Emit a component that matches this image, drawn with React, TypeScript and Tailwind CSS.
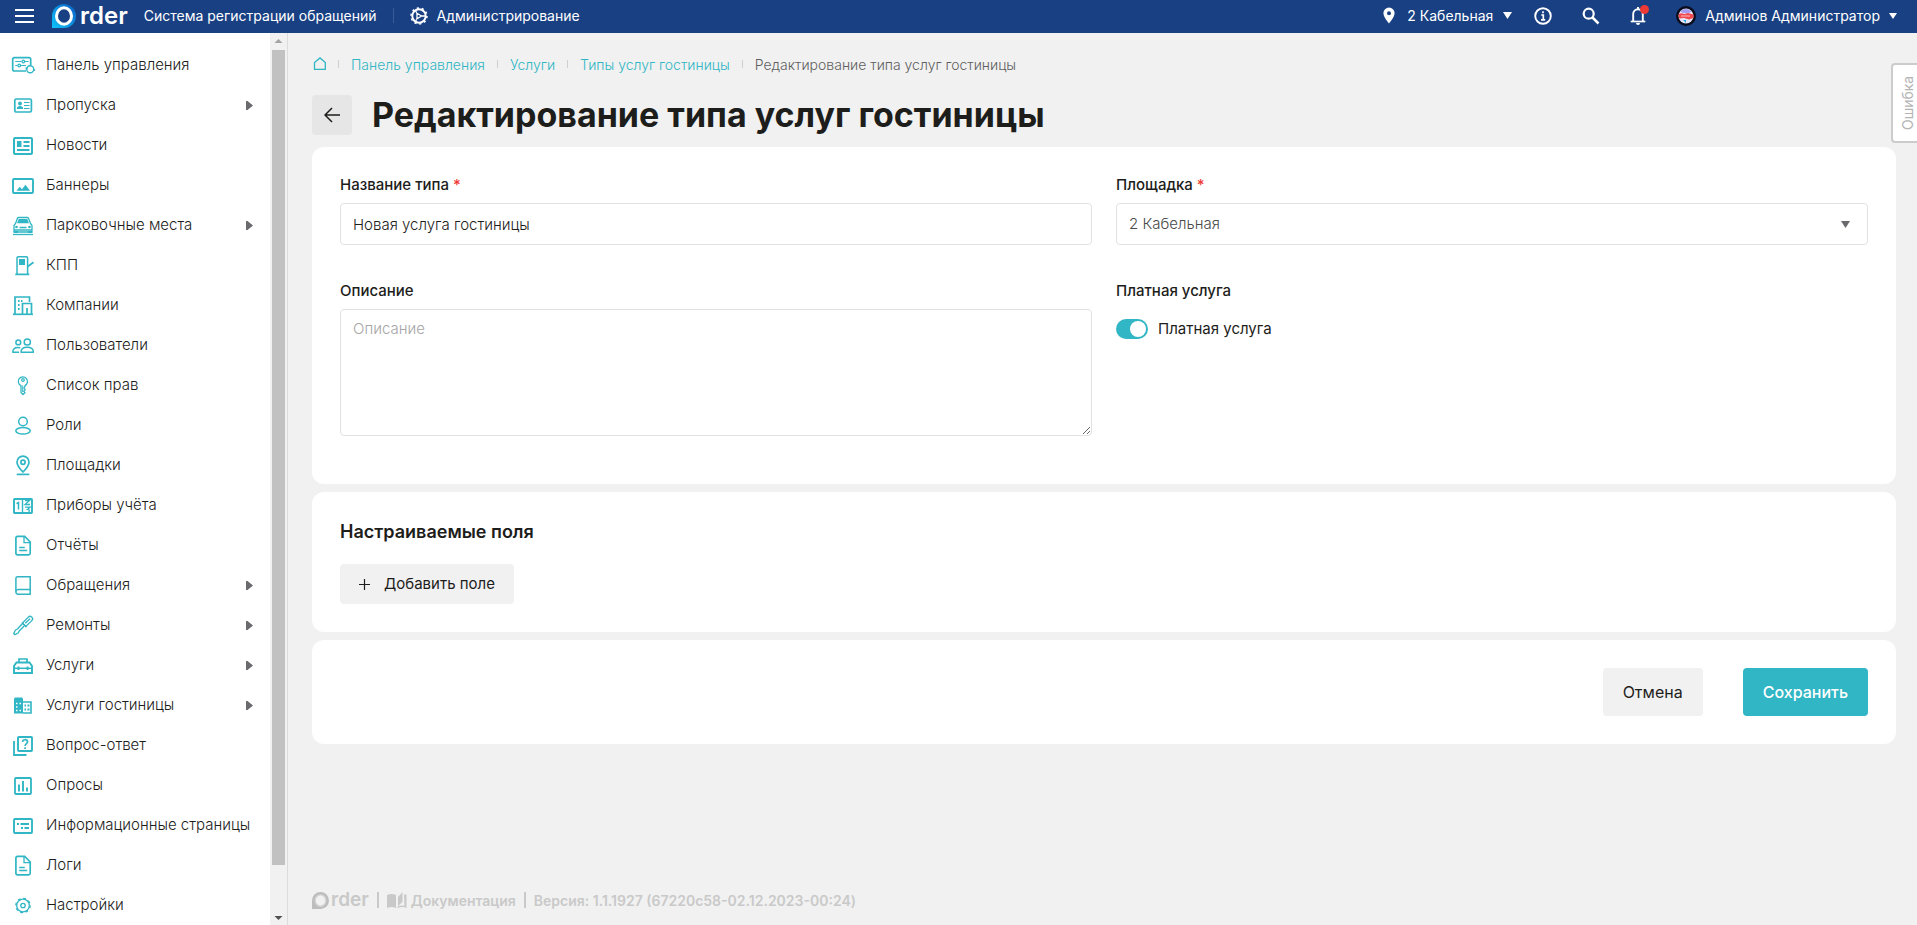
import React, { useState } from "react";
import clsx from "clsx";

type IconProps = { children: React.ReactNode };

function MenuIcon({ children }: IconProps) {
  return (
    <svg
      viewBox="0 0 22 22"
      className="h-[22px] w-[22px] shrink-0 overflow-visible text-[#30b6c4]"
      fill="none"
      stroke="currentColor"
      strokeWidth="1.7"
      aria-hidden="true"
    >
      {children}
    </svg>
  );
}

const documentIcon = (
  <>
    <path d="M5.5 2.3h7.2l5.5 5.7v11.2a1.6 1.6 0 0 1-1.6 1.6H5.5a1.6 1.6 0 0 1-1.6-1.6V3.9a1.6 1.6 0 0 1 1.6-1.6z" />
    <path d="M12 2.5v6.2h6M7.2 13.5h5.6M7.2 16.5h8" strokeWidth="1.3" />
  </>
);

const menu: { title: string; icon: React.ReactNode; nested?: boolean }[] = [
  {
    title: "Панель управления",
    icon: (
      <>
        <path d="M14 17H2.3A1.6 1.6 0 0 1 .7 15.4V5.3a1.6 1.6 0 0 1 1.6-1.6h14.8a1.6 1.6 0 0 1 1.6 1.6V11" />
        <path d="M3.3 7.5h6M13 7.5h3.5M3.3 11.5h2.2M9 11.5h5" strokeWidth="1.2" />
        <circle cx="11.3" cy="7.5" r="1.3" strokeWidth="1.2" />
        <circle cx="7.2" cy="11.5" r="1.3" strokeWidth="1.2" />
        <circle cx="18.2" cy="15.3" r="3.5" strokeWidth="1.4" />
        <path d="M13.5 14.3h2M21 16h2.2" />
      </>
    ),
  },
  {
    title: "Пропуска",
    nested: true,
    icon: (
      <>
        <rect x="2.8" y="5" width="16.6" height="13" rx="1.5" />
        <circle cx="8" cy="9.5" r="1.9" fill="currentColor" stroke="none" />
        <path d="M4.8 15c0-2.2 1.5-3 3.2-3s3.2.8 3.2 3z" fill="currentColor" stroke="none" />
        <path d="M12 8.5h5.5M12 11.5h5.5M12 14.5h5.5" strokeWidth="1.2" />
      </>
    ),
  },
  {
    title: "Новости",
    icon: (
      <>
        <rect x="2" y="4" width="18" height="16" rx="1" strokeWidth="2" />
        <path d="M5 7h4.5v6H5z" fill="currentColor" stroke="none" />
        <path d="M11.5 8h6M11.5 12h6M5 16h12.5" strokeWidth="2" />
      </>
    ),
  },
  {
    title: "Баннеры",
    icon: (
      <>
        <rect x="1" y="5" width="20" height="14" rx="1" strokeWidth="1.9" />
        <path d="M4.5 16.8l3.2-4 2.3 2.5 3.5-4.5 4.5 6z" fill="currentColor" stroke="none" />
      </>
    ),
  },
  {
    title: "Парковочные места",
    nested: true,
    icon: (
      <>
        <path d="M3.5 9.5l2-5.2a1.5 1.5 0 0 1 1.3-.8h8.4a1.5 1.5 0 0 1 1.3.8l2 5.2 1.5 2V18H2v-6.5z" strokeWidth="1.3" />
        <path d="M6.7 5h8.6l1.7 4.3H5z" fill="currentColor" stroke="none" />
        <path d="M7.5 13.5h7M2 16h18" strokeWidth="1.3" />
        <circle cx="4.5" cy="13" r="1.3" fill="currentColor" stroke="none" />
        <circle cx="17.5" cy="13" r="1.3" fill="currentColor" stroke="none" />
        <path d="M2 17h4v2H2zM16 17h4v2h-4z" fill="currentColor" stroke="none" />
        <path d="M1 20.5h20" strokeWidth="1.3" />
      </>
    ),
  },
  {
    title: "КПП",
    icon: (
      <>
        <path d="M5 20V4a1.3 1.3 0 0 1 1.3-1.3h8A1.3 1.3 0 0 1 15.6 4v16" strokeWidth="1.5" />
        <path d="M7 5h6v6H7z" fill="currentColor" stroke="none" />
        <path d="M3.3 20.3h14M15.8 12.5l5.7-4.3" />
      </>
    ),
  },
  {
    title: "Компании",
    icon: (
      <>
        <path d="M3 20V3h14.5v5" />
        <path d="M10.5 20V9.5h9V20M15 20v-6" />
        <path d="M1 20.3h20" />
        <path d="M6 7h1.6M6 11h1.6M6 15h1.6M9 7h1.5" strokeWidth="1.8" />
      </>
    ),
  },
  {
    title: "Пользователи",
    icon: (
      <>
        <circle cx="15.3" cy="8" r="3.1" strokeWidth="1.5" />
        <circle cx="6.3" cy="8.4" r="2.4" strokeWidth="1.5" />
        <path d="M9 18.2c0-3.3 2.7-4.9 6.2-4.9s6.2 1.6 6.2 4.9z" strokeWidth="1.5" strokeLinejoin="round" />
        <path d="M7 18.2H.8c0-3 1.7-4.8 5-4.8 1 0 1.8.2 2.5.5" strokeWidth="1.5" strokeLinejoin="round" />
      </>
    ),
  },
  {
    title: "Список прав",
    icon: (
      <>
        <path d="M9 12V18.5l2 2 2-1.8-1.3-1.6 1.6-1.5-1.4-1.5L13 12.3V11.6a4.6 4.6 0 1 0-4 .1z" strokeWidth="1.3" strokeLinejoin="round" />
        <circle cx="11" cy="6" r="1.3" strokeWidth="1.2" />
        <path d="M10.7 11.5v6.5" strokeWidth="1" />
      </>
    ),
  },
  {
    title: "Роли",
    icon: (
      <>
        <circle cx="11" cy="7.5" r="4.3" strokeWidth="1.5" />
        <ellipse cx="11" cy="16.8" rx="7.2" ry="3.3" strokeWidth="1.5" />
      </>
    ),
  },
  {
    title: "Площадки",
    icon: (
      <>
        <path d="M11 18c-3.7-3.8-6-7-6-9.8a6 6 0 0 1 12 0c0 2.8-2.3 6-6 9.8z" />
        <circle cx="11" cy="8.2" r="2.1" />
        <path d="M4.7 20.4h12.6" />
      </>
    ),
  },
  {
    title: "Приборы учёта",
    icon: (
      <>
        <rect x="2" y="5" width="18" height="14" rx=".8" strokeWidth="1.9" />
        <path d="M10.5 5v14" strokeWidth="1.4" />
        <path d="M4.5 9.7L6.5 8.5V15.5" strokeWidth="1.5" />
        <path d="M13 6.5h4.5l-4.5 4h5M13 13.2h5l-2.5 2.2q2.8.2 1.3 2.6" strokeWidth="1.3" />
      </>
    ),
  },
  { title: "Отчёты", icon: documentIcon },
  {
    title: "Обращения",
    nested: true,
    icon: (
      <>
        <path d="M5.5 2.8h12.7v17.4H6a2.1 2.1 0 0 1-2.1-2.1V4.4a1.6 1.6 0 0 1 1.6-1.6z" strokeWidth="1.5" />
        <path d="M4 17.5a2.1 2.1 0 0 1 2-1.9h12.2" strokeWidth="1.5" />
      </>
    ),
  },
  {
    title: "Ремонты",
    nested: true,
    icon: (
      <>
        <path d="M10.3 9.3l6-6.2a2.4 2.4 0 0 1 3.5 3.5l-6.2 6z" strokeWidth="1.3" strokeLinejoin="round" />
        <path d="M10 10l-4.5 5-2 1-1.8 3.5 1.2 1.2L6.2 19l1-2 4.8-4.8" strokeWidth="1.3" strokeLinejoin="round" />
        <path d="M13.3 9.3l4.7-4.5M10 8.5l4.5 4.5" strokeWidth="1.2" />
      </>
    ),
  },
  {
    title: "Услуги",
    nested: true,
    icon: (
      <>
        <path d="M7 8.5V5h8v3.5" strokeWidth="1.7" />
        <path d="M2 19V12l2.5-3.5h13L20 12v7z" strokeWidth="1.9" />
        <path d="M2 14.3h18" strokeWidth="1.5" />
        <path d="M6.5 12.5V16M15.5 12.5V16" strokeWidth="1.8" />
      </>
    ),
  },
  {
    title: "Услуги гостиницы",
    nested: true,
    icon: (
      <>
        <path d="M3 3.5h7l1 1V19.5H2V4.5z" fill="currentColor" stroke="none" />
        <path d="M11 8h8v11h-8" strokeWidth="1.6" />
        <path d="M4 9.5h1.5M7.5 9.5H9M4 13h1.5M4 16.5h1.5M7.5 16.5H9" stroke="#fff" strokeWidth="1.3" />
        <path d="M12.5 11.5h1.5M15.5 11.5h2M12.5 15.5h1.5M15.5 15.5h2" strokeWidth="2" />
      </>
    ),
  },
  {
    title: "Вопрос-ответ",
    icon: (
      <>
        <rect x="6" y="3" width="14" height="14" rx=".8" strokeWidth="1.9" />
        <path d="M2 7v14h12.5" strokeWidth="1.8" />
        <path d="M10.6 8c0-3 5-3 5-.2 0 1.9-2.5 1.9-2.5 4.2M13.1 13.2v1.7" strokeWidth="1.7" />
      </>
    ),
  },
  {
    title: "Опросы",
    icon: (
      <>
        <rect x="3" y="4" width="16" height="16" rx="1" strokeWidth="1.8" />
        <path d="M7 10.5v7M11 7v10.5M15 13.5v4" strokeWidth="1.9" />
      </>
    ),
  },
  {
    title: "Информационные страницы",
    icon: (
      <>
        <rect x="2" y="5" width="18" height="14" rx="1" strokeWidth="1.9" />
        <path d="M5 10h2M8.5 10h8.5M9 14h2M12.5 14H17" strokeWidth="1.9" />
      </>
    ),
  },
  { title: "Логи", icon: documentIcon },
  {
    title: "Настройки",
    icon: (
      <>
        <circle cx="11" cy="11.5" r="6.3" strokeWidth="1.3" />
        <circle cx="11" cy="11.5" r="7.2" strokeWidth="1.3" strokeDasharray="2.8 2.85" />
        <circle cx="11" cy="11.5" r="2.2" strokeWidth="1.3" />
      </>
    ),
  },
];

const breadcrumbs = ["Панель управления", "Услуги", "Типы услуг гостиницы"];

function Header() {
  return (
    <header className="flex h-[33px] shrink-0 items-center bg-[#184083] pr-5 pb-[2px] pl-[15px] text-[14px] text-white">
      <button type="button" aria-label="Меню" className="flex w-[19px] flex-col gap-1">
        <span className="h-[2px] bg-white" />
        <span className="h-[2px] bg-white" />
        <span className="h-[2px] bg-white" />
      </button>
      <a href="#" className="ml-[18px] flex items-center gap-1">
        <svg viewBox="0 0 24 24" className="h-6 w-6" aria-hidden="true">
          <defs>
            <linearGradient id="drop" x1="0" y1="1" x2="1" y2="0">
              <stop offset="0" stopColor="#10c4fb" />
              <stop offset="1" stopColor="#0a5bc4" />
            </linearGradient>
          </defs>
          <path d="M0 24V12a12 12 0 1 1 12 12z" fill="url(#drop)" />
          <ellipse cx="12" cy="12" rx="7.5" ry="8.3" fill="#184083" stroke="#fff" strokeWidth="3" />
        </svg>
        <span className="text-[24px] leading-[30px] font-semibold">rder</span>
      </a>
      <span className="ml-4">Система регистрации обращений</span>
      <span className="ml-4 h-[15px] w-px bg-[#3a5c96]" />
      <a href="#" className="ml-4 flex items-center gap-[9px]">
        <svg viewBox="0 0 18 18" className="h-[18px] w-[18px]" fill="none" stroke="currentColor" aria-hidden="true">
          <circle cx="9" cy="9" r="6.7" strokeWidth="1.9" />
          <circle cx="9" cy="9" r="8" strokeWidth="1.5" strokeDasharray="2.2 2.83" />
          <path d="M7 6.2L11.5 9 7 11.8zM7 6.5L5.5 3.5M7 11.5l-1.5 3M11.5 9H15.5" strokeWidth="1.3" />
        </svg>
        Администрирование
      </a>

      <button type="button" className="ml-auto flex items-center">
        <svg viewBox="0 0 12 17" className="h-[17px] w-3" fill="currentColor" aria-hidden="true">
          <path fillRule="evenodd" d="M6 .5A5.6 5.6 0 0 0 .4 6.1C.4 10.3 6 16.5 6 16.5s5.6-6.2 5.6-10.4A5.6 5.6 0 0 0 6 .5zm0 3.7a2 2 0 1 1 0 4 2 2 0 0 1 0-4z" />
        </svg>
        <span className="ml-3">2 Кабельная</span>
        <svg viewBox="0 0 9 7" className="ml-[10px] h-[7px] w-[9px]" fill="currentColor" aria-hidden="true">
          <path d="M0 0h9L4.5 7z" />
        </svg>
      </button>
      <button type="button" aria-label="Информация" className="ml-[22px]">
        <svg viewBox="0 0 18 18" className="h-[18px] w-[18px]" fill="none" stroke="currentColor" aria-hidden="true">
          <circle cx="9" cy="9" r="7.8" strokeWidth="1.9" />
          <path d="M9 4.2v2M7.3 8h2v4.7M7 12.9h4.2" strokeWidth="1.7" />
        </svg>
      </button>
      <button type="button" aria-label="Поиск" className="ml-[30px]">
        <svg viewBox="0 0 18 18" className="h-[18px] w-[18px]" fill="none" stroke="currentColor" aria-hidden="true">
          <circle cx="6.7" cy="6.7" r="5" strokeWidth="2.2" />
          <path d="M10.5 10.5l6 6" strokeWidth="2.5" />
        </svg>
      </button>
      <button type="button" aria-label="Уведомления" className="relative ml-[30px]">
        <svg viewBox="0 0 16 19" className="h-[19px] w-4" fill="none" stroke="currentColor" aria-hidden="true">
          <path d="M3.2 15V8a4.8 4.8 0 0 1 9.6 0v7M8 1v2" strokeWidth="1.9" />
          <path d="M.7 15.5h14.6" strokeWidth="1.7" />
          <path d="M6 17h4a2 2 0 0 1-4 0z" fill="currentColor" stroke="none" />
        </svg>
        <span className="absolute -top-px -right-[3px] h-[9px] w-[9px] rounded-full bg-[#ee3a34]" />
      </button>
      <button type="button" className="ml-[30px] flex items-center">
        <svg viewBox="0 0 20 20" className="h-5 w-5" aria-hidden="true">
          <circle cx="10" cy="10" r="10" fill="#0a0c1c" />
          <circle cx="10" cy="10" r="7.5" fill="#e9e6fa" />
          <path d="M4.5 5.500a7.500 7.500 0 0 1 11 0l-2.500 1.500H7z" fill="#a79df0" />
          <path d="M2.500 8.500Q5 6.500 8 8l4-1 5.500 1.500v3.500L13 13.500 8 12l-5 .5z" fill="#ef4a50" />
          <path d="M5 10h9" stroke="#fbb" />
          <path d="M7 14h3v3z" fill="#22a7e8" />
        </svg>
        <span className="ml-[9px]">Админов Администратор</span>
        <svg viewBox="0 0 8 6" className="ml-[9px] h-[6px] w-2" fill="currentColor" aria-hidden="true">
          <path d="M0 0h8L4 6z" />
        </svg>
      </button>
    </header>
  );
}

function Sidebar() {
  return (
    <aside className="flex w-72 shrink-0 border-r border-[#dcdcdc] bg-white">
      <nav className="min-w-0 flex-1 overflow-hidden pt-3">
        <ul>
          {menu.map((item) => (
            <li key={item.title}>
              <a href="#" className="flex h-10 items-center gap-3 pr-[17px] pl-3 text-[15px] font-light whitespace-nowrap">
                <MenuIcon>{item.icon}</MenuIcon>
                {item.title}
                {item.nested && (
                  <svg viewBox="0 0 7 9" className="ml-auto h-[9px] w-[7px]" fill="#6a6a6e" aria-hidden="true">
                    <path d="M0 0h1.5L7 4.5 1.5 9H0z" />
                  </svg>
                )}
              </a>
            </li>
          ))}
        </ul>
      </nav>
      <div className="flex w-[17px] flex-col items-center bg-[#f1f1f1]">
        <svg viewBox="0 0 17 17" className="h-[17px] w-[17px]" fill="#a3a3a3" aria-hidden="true">
          <path d="M8.5 6L12.5 10h-8z" />
        </svg>
        <div className="w-full flex-1 px-[2px]">
          <div className="h-[95%] bg-[#c1c1c1]" />
        </div>
        <svg viewBox="0 0 17 17" className="h-[17px] w-[17px]" fill="#505050" aria-hidden="true">
          <path d="M4.5 8h8l-4 4z" />
        </svg>
      </div>
    </aside>
  );
}

function Field({
  id,
  label,
  required,
  children,
}: {
  id: string;
  label: string;
  required?: boolean;
  children: React.ReactNode;
}) {
  return (
    <div>
      <label htmlFor={id} className="mb-2 block text-[15px] leading-5 font-medium">
        {label}
        {required && <span className="text-[#ee3a34]"> *</span>}
      </label>
      {children}
    </div>
  );
}

const control = "block w-full rounded border border-[#e2e2e2] bg-white px-3 text-[15px] font-light outline-none";

function Footer() {
  return (
    <footer className="mt-auto flex items-center gap-2 pt-8 pb-[13px] text-[14px] font-semibold text-[#c9c9c9]">
      <a href="#" className="flex items-center gap-[2px]">
        <svg viewBox="0 0 24 24" className="h-[17px] w-[17px]" aria-hidden="true">
          <path d="M0 24V12a12 12 0 1 1 12 12z" fill="#bdbdbd" />
          <ellipse cx="12" cy="12" rx="7.5" ry="8" fill="#f1f1f1" stroke="#d4d4d4" strokeWidth="2" />
        </svg>
        <span className="text-[19px] leading-6">rder</span>
      </a>
      <span className="h-4 w-[2px] bg-[#c9c9c9]" />
      <a href="#" className="flex items-center gap-1">
        <svg viewBox="0 0 20 17" className="h-[17px] w-5" fill="currentColor" aria-hidden="true">
          <path d="M0 3q4.5-2 9 0v13q-4.5-2-9 0z" />
          <path d="M11 5l4.5-5v10L11 14z" />
          <path d="M17 2.5h2.5V16q-4-2-9 0v-1.5q3.5-1.5 7-.8z" />
        </svg>
        Документация
      </a>
      <span className="h-4 w-[2px] bg-[#c9c9c9]" />
      <span>Версия: 1.1.1927 (67220c58-02.12.2023-00:24)</span>
    </footer>
  );
}

export default function App() {
  const [name, setName] = useState("Новая услуга гостиницы");
  const [description, setDescription] = useState("");
  const [paid, setPaid] = useState(true);

  return (
    <div className="flex h-screen flex-col overflow-hidden bg-[#f1f1f1] font-['Inter','Liberation_Sans',sans-serif] text-[#1d1d1b]">
      <Header />
      <div className="flex min-h-0 flex-1">
        <Sidebar />
        <main className="relative flex min-w-0 flex-1 flex-col pr-[21px] pl-6">
          <nav className="mt-5 flex h-[22px] items-center gap-3 text-[14px] font-light">
            <a href="#" aria-label="Главная" className="text-[#30b6c4]">
              <svg viewBox="0 0 14 14" className="h-[14px] w-[14px]" fill="none" stroke="currentColor" strokeWidth="1.300" aria-hidden="true">
                <path d="M2.500 12.300V5.500L8 .9l5.300 4.600v6.800z" />
              </svg>
            </a>
            {breadcrumbs.map((crumb) => (
              <React.Fragment key={crumb}>
                <span className="h-2 w-px bg-[#cfcfcf]" />
                <a href="#" className="text-[#30b6c4]">
                  {crumb}
                </a>
              </React.Fragment>
            ))}
            <span className="h-2 w-px bg-[#cfcfcf]" />
            <span className="text-[#5f5f5f]">Редактирование типа услуг гостиницы</span>
          </nav>

          <div className="mt-5 flex items-center gap-5">
            <button type="button" aria-label="Назад" className="flex h-10 w-10 items-center justify-center rounded bg-[#e6e6e6]">
              <svg viewBox="0 0 16 16" className="h-4 w-4" fill="none" stroke="currentColor" strokeWidth="1.5" aria-hidden="true">
                <path d="M16 8H1.5M8 1L1 8l7 7" />
              </svg>
            </button>
            <h1 className="text-[34px] leading-10 font-bold">Редактирование типа услуг гостиницы</h1>
          </div>

          <form className="mt-3 flex flex-col gap-2" onSubmit={(e) => e.preventDefault()}>
            <section className="grid grid-cols-2 gap-x-6 gap-y-9 rounded-xl bg-white px-7 pt-7 pb-12">
              <Field id="name" label="Название типа" required>
                <input
                  id="name"
                  className={clsx(control, "h-[42px]")}
                  value={name}
                  onChange={(e) => setName(e.target.value)}
                />
              </Field>
              <Field id="site" label="Площадка" required>
                <div className="relative">
                  <select id="site" className={clsx(control, "h-[42px] appearance-none text-[#4a4a4a]")}>
                    <option>2 Кабельная</option>
                  </select>
                  <svg viewBox="0 0 9 7" className="pointer-events-none absolute top-[18px] right-[18px] h-[7px] w-[9px]" fill="#6a6a6e" aria-hidden="true">
                    <path d="M0 0h9L4.5 7z" />
                  </svg>
                </div>
              </Field>
              <Field id="description" label="Описание">
                <textarea
                  id="description"
                  className={clsx(control, "h-[127px] resize py-2 placeholder:text-[#a6a6a6]")}
                  placeholder="Описание"
                  value={description}
                  onChange={(e) => setDescription(e.target.value)}
                />
              </Field>
              <Field id="paid" label="Платная услуга">
                <label className="flex h-10 items-center gap-[10px] text-[15px]">
                  <input
                    id="paid"
                    type="checkbox"
                    role="switch"
                    checked={paid}
                    onChange={(e) => setPaid(e.target.checked)}
                    className="flex h-5 w-8 appearance-none items-center rounded-full bg-[#c4c4c4] px-[2px] before:h-4 before:w-4 before:rounded-full before:bg-white checked:justify-end checked:bg-[#30b6c4]"
                  />
                  Платная услуга
                </label>
              </Field>
            </section>

            <section className="rounded-xl bg-white p-7">
              <h2 className="text-[18px] leading-6 font-semibold">Настраиваемые поля</h2>
              <button type="button" className="mt-5 flex h-10 items-center gap-[14px] rounded bg-[#f1f1f1] px-[19px] text-[15px]">
                <svg viewBox="0 0 11 11" className="h-[11px] w-[11px]" fill="none" stroke="currentColor" strokeWidth="1.2" aria-hidden="true">
                  <path d="M5.5 0v11M0 5.5h11" />
                </svg>
                Добавить поле
              </button>
            </section>

            <section className="flex justify-end gap-10 rounded-xl bg-white p-7">
              <button type="button" className="h-12 rounded bg-[#f1f1f1] px-5 text-[16px]">
                Отмена
              </button>
              <button type="submit" className="h-12 rounded bg-[#30b6c4] px-5 text-[16px] font-medium text-white">
                Сохранить
              </button>
            </section>
          </form>

          <Footer />

          <button
            type="button"
            className="absolute top-[30px] right-0 flex h-20 w-[26px] rotate-180 items-center justify-center rounded-r border-2 border-l-0 border-[#cccccc] bg-white pr-1 text-[14px] text-[#b4b4b4] [writing-mode:vertical-rl]"
          >
            Ошибка
          </button>
        </main>
      </div>
    </div>
  );
}
